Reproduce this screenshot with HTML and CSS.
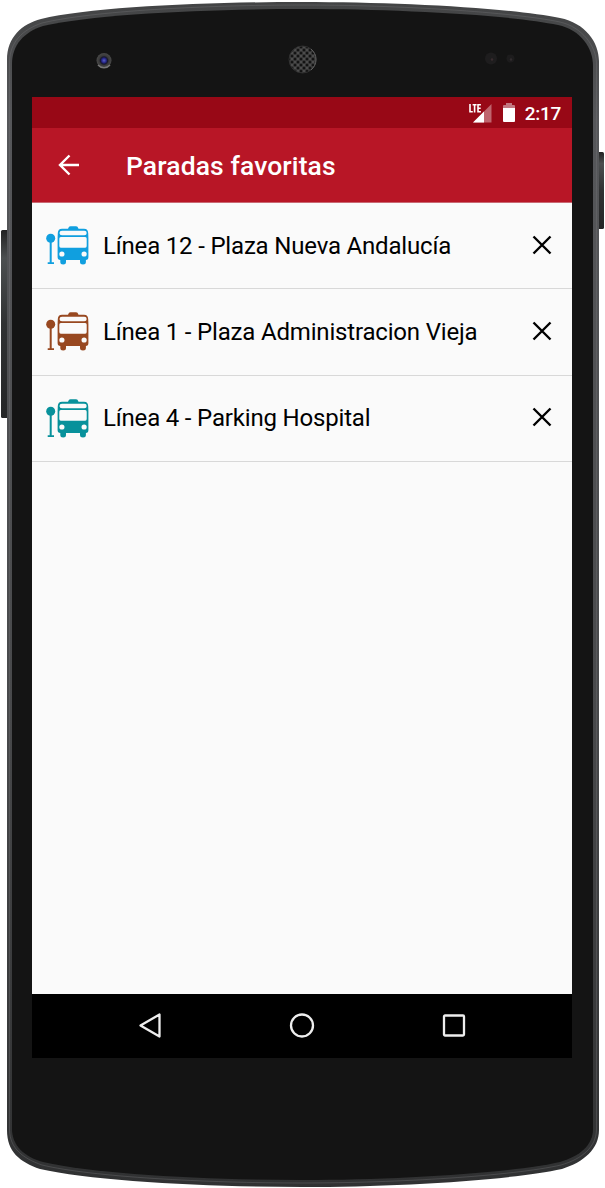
FILE: index.html
```html
<!DOCTYPE html>
<html lang="es">
<head>
<meta charset="utf-8">
<title>Paradas favoritas</title>
<link rel="stylesheet" href="styles.css">
</head>
<body>
<div class="device">
  <svg class="device-body" viewBox="0 0 605 1188" aria-hidden="true">
    <defs>
      <linearGradient id="rim" x2="0" y2="1"><stop offset="0" stop-color="#434445"/><stop offset=".1" stop-color="#56575a"/><stop offset=".6" stop-color="#48494b"/><stop offset="1" stop-color="#303132"/></linearGradient>
      <linearGradient id="key" x2="0" y2="1"><stop offset="0" stop-color="#222"/><stop offset=".15" stop-color="#4c4f50"/><stop offset=".5" stop-color="#303233"/><stop offset="1" stop-color="#252627"/></linearGradient>
      <radialGradient id="lens"><stop offset="0" stop-color="#5961c4"/><stop offset=".3" stop-color="#25258a"/><stop offset=".48" stop-color="#17172b"/><stop offset=".65" stop-color="#3a3a3a"/><stop offset="1" stop-color="#484848"/></radialGradient>
      <pattern id="mesh" width="6" height="6" patternUnits="userSpaceOnUse" x="299.500" y="57.500"><rect width="6" height="6" fill="#4c4c4c"/><circle cx="1.500" cy="1.500" r="1.500" fill="#080808"/><circle cx="4.500" cy="4.500" r="1.500" fill="#080808"/></pattern>
    </defs>
    <rect x="1" y="230" width="8" height="188" rx="1.500" fill="url(#key)"/>
    <rect x="597" y="152" width="7" height="77" rx="1.500" fill="url(#key)"/>
    <path fill="url(#rim)" d="M7 60C7 37 22 24 41 19C92 7 205 2 302 2C399 2 512 8 560 18C585 23 599 42 599 61V1130C599 1149 584 1162 562 1169C512 1180 398 1187 302 1187C206 1187 92 1181 40 1169C20 1162 7 1152 7 1130Z"/>
    <path fill="none" stroke="#77787a" stroke-opacity=".35" d="M9.500 62C10 42 22 30 42 23C92 11 205 5 302 5C399 5 512 12 560 22C582 27 596 46 596.500 63V1130C596 1147 582 1159 561 1165C512 1176 398 1183 302 1183C206 1183 92 1177 42 1165C22 1158 10 1148 9.500 1130Z"/>
    <path fill="#141414" d="M12 64C12 45 24 32 43 26C94 14 206 9 302 9C398 9 511 15 558 25C581 30 593 48 593 66V1129C593 1145 580 1156 560 1162C511 1173 397 1180 302 1180C207 1180 94 1174 43 1162C24 1157 12 1145 12 1129Z"/>
    <circle cx="104" cy="60.500" r="7.500" fill="url(#lens)"/>
    <path d="M98 65a8 8 0 0 0 12 0" fill="none" stroke="#777" stroke-width="1.500"/>
    <circle cx="302.500" cy="59.500" r="13.500" fill="url(#mesh)" stroke="#303030"/>
    <path d="M311 49a13.500 13.500 0 0 1 0 21" fill="none" stroke="#606060"/>
    <circle cx="491" cy="58.500" r="6" fill="#1e1d1e"/><circle cx="492" cy="59.500" r="1.200" fill="#382b2e"/>
    <circle cx="510.500" cy="58.500" r="4" fill="#1d1c1d"/><circle cx="511" cy="59.500" r="1.200" fill="#302c2d"/>
  </svg>
  <main class="screen">
    <div class="statusbar">
      <svg class="signal" viewBox="0 0 24 22" aria-hidden="true"><path fill="#fff" fill-opacity=".38" d="M23.500 3V21.500H5Z"/><path fill="#fff" d="M16 10.500V21.500H5Z"/><path fill="#980816" d="M0 0H13.500V12H0Z"/><path d="M2 3v7.800h2.800M4.600 3.800h4M6.600 3.800v7.700M12.900 3.800H10v7h2.900M10 7.300h2.700" fill="none" stroke="#fff" stroke-width="1.600"/></svg>
      <svg class="battery" viewBox="0 0 12 19" aria-hidden="true"><path fill="#c37881" d="M0 4V3Q0 2 1 2H3V0H9V2H11Q12 2 12 3V5H0Z"/><path fill="#fff" d="M0 5H12V18Q12 19 11 19H1Q0 19 0 18Z"/></svg>
      <span class="clock">2:17</span>
    </div>
    <header class="appbar">
      <svg class="back" viewBox="0 0 22 22" aria-hidden="true"><path d="M21 11H2M11.500 1.500L2 11l9.500 9.500"/></svg>
      <h1 class="title">Paradas favoritas</h1>
    </header>
    <svg class="symbols" aria-hidden="true">
      <symbol id="bus" viewBox="0 0 44 40">
        <g fill="currentColor">
          <circle cx="4.700" cy="12.300" r="4.500"/><path d="M3.700 16h2v20.200h2.300V38H1.700v-1.800h2Z"/>
          <path fill-rule="evenodd" d="M22 2.700L23 .8Q23.500.2 24.500.2H30Q31 .2 31.500.8L32.500 2.700H38Q42 2.700 42.200 7L42.400 12V31Q42.400 34 39.900 34V36Q39.900 38.500 37 38.500Q34 38.500 34 36V34H20V36Q20 38.500 17.200 38.500Q14.300 38.500 14.300 36V34Q11.600 34 11.600 31V12L11.800 7Q12 2.700 16 2.700ZM16 4.700Q13.500 4.700 13.500 7Q13.500 9.200 16 9.200H38.300Q40.700 9.200 40.700 7Q40.700 4.700 38.300 4.700ZM14.800 11Q13.300 11 13.300 12.800V20Q13.300 21.700 14.800 21.700H39.200Q40.700 21.700 40.700 20V12.800Q40.700 11 39.200 11Z"/>
        </g>
        <circle cx="15.900" cy="28" r="2.600" fill="#fafafa"/><circle cx="38.100" cy="28" r="2.600" fill="#fafafa"/>
      </symbol>
      <symbol id="close" viewBox="0 0 20 20"><path d="M1.500 1.500l17 17M18.500 1.500l-17 17" stroke="#000" stroke-width="2.400"/></symbol>
    </svg>
    <ul class="stops">
      <li class="stop"><svg class="bus blue"><use href="#bus"/></svg><span class="name">Línea 12 - Plaza Nueva Andalucía</span><svg class="close"><use href="#close"/></svg></li>
      <li class="stop"><svg class="bus brown"><use href="#bus"/></svg><span class="name">Línea 1 - Plaza Administracion Vieja</span><svg class="close"><use href="#close"/></svg></li>
      <li class="stop"><svg class="bus teal"><use href="#bus"/></svg><span class="name">Línea 4 - Parking Hospital</span><svg class="close"><use href="#close"/></svg></li>
    </ul>
    <nav class="navbar">
      <svg viewBox="0 0 26 26"><path d="M3.500 12.500L22.500 1.500V23.500Z"/></svg>
      <svg viewBox="0 0 26 26"><circle cx="13" cy="12.500" r="11"/></svg>
      <svg viewBox="0 0 26 26"><rect x="3" y="2.500" width="20" height="20" rx="1"/></svg>
    </nav>
  </main>
</div>
</body>
</html>
```
FILE: styles.css
```css
body { margin: 0; background: #fff; font-family: Roboto, sans-serif; }
.device { position: relative; width: 605px; height: 1188px; box-sizing: border-box; padding: 97px 33px 130px 32px; overflow: hidden; }
.device-body { position: absolute; inset: 0; width: 605px; height: 1188px; }
.screen { position: relative; height: 961px; display: flex; flex-direction: column; background: #fafafa; }
.statusbar { height: 31px; display: flex; align-items: center; justify-content: flex-end; box-sizing: border-box; padding: 2px 11px 0 0; background: #980816; color: #fff; }
.signal { width: 24px; height: 22px; margin: 0 11px 4px 0; }
.battery { width: 12px; height: 19px; margin: 0 10px 2px 0; }
.clock { font-size: 19px; font-weight: 500; line-height: 24px; letter-spacing: -.3px; }
.appbar { height: 75px; display: flex; align-items: center; box-sizing: border-box; padding: 0 26px; background: #b81626; color: #fff; border-bottom: 1px solid #c96973; }
.back { width: 22px; height: 22px; fill: none; stroke: #fff; stroke-width: 2.400; }
.title { margin: 2px 0 0 46px; font-size: 26.500px; font-weight: 500; line-height: 32px; letter-spacing: .1px; white-space: nowrap; }
.symbols { display: none; }
.stops { flex: 1; margin: 0; padding: 0; list-style: none; }
.stop { height: 86.300px; display: flex; align-items: center; box-sizing: border-box; border-bottom: 1px solid #d8d8d8; padding: 0 20px 0 14px; }
.bus { width: 44px; height: 40px; margin-top: 1px; }
.blue { color: #109fdf; }
.brown { color: #984820; }
.teal { color: #07919b; }
.name { flex: 1; margin-left: 13px; font-size: 24px; line-height: 30px; letter-spacing: -.18px; color: #000; white-space: nowrap; }
.close { width: 20px; height: 20px; margin-bottom: 2px; }
.navbar { height: 64px; display: flex; align-items: center; justify-content: center; gap: 126px; background: #000; }
.navbar svg { width: 26px; height: 26px; fill: none; stroke: #eee; stroke-width: 2.300; stroke-linejoin: round; }
```
